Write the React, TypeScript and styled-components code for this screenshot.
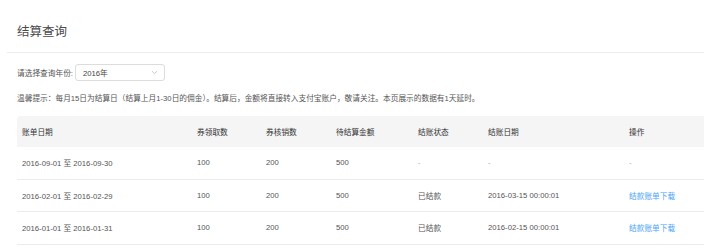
import React from "react";
import styled, { createGlobalStyle } from "styled-components";

const GlobalStyle = createGlobalStyle`
  html, body { margin: 0; padding: 0; background: #fff; overflow: hidden; }
  body { font-family: "Liberation Sans", "Noto Sans CJK SC", sans-serif; }
`;

const Page = styled.div`
  padding-left: 7px;
  width: 697px;
`;

const Header = styled.div`
  height: 52px;
  border-bottom: 1px solid #ececec;
  padding-left: 10px;
  display: flex;
  align-items: flex-start;
`;

const Title = styled.h1`
  margin: 22px 0 0;
  font-size: 12.5px;
  line-height: 20px;
  font-weight: 400;
  color: #4a4a4a;
`;

const Content = styled.div`
  padding-left: 10px;
`;

const FilterRow = styled.div`
  margin-top: 11px;
  display: flex;
  align-items: center;
  gap: 2px;
  height: 17px;
`;

const Label = styled.span`
  font-size: 7.7px;
  color: #555;
`;

const Select = styled.div`
  width: 90px;
  height: 17px;
  box-sizing: border-box;
  border: 1px solid #dcdcdc;
  border-radius: 3px;
  display: flex;
  align-items: center;
  justify-content: space-between;
  padding: 0 6px 0 7px;
  font-size: 7.7px;
  color: #444;
`;

const Notice = styled.p`
  margin: 12px 0 0;
  font-size: 7.7px;
  line-height: 12px;
  color: #555;
`;

const Table = styled.table`
  margin-top: 11px;
  width: 687px;
  border-collapse: separate;
  border-spacing: 0;
  table-layout: fixed;
  font-size: 7.7px;
`;

const Th = styled.th`
  background: #f5f5f5;
  height: 31px;
  padding: 0 5px;
  text-align: left;
  font-weight: 400;
  color: #333;
  &:first-child { border-top-left-radius: 4px; }
`;

const Td = styled.td<{ $muted?: boolean }>`
  height: 32.5px;
  box-sizing: border-box;
  padding: 0 5px;
  border-bottom: 1px solid #ebebeb;
  color: ${(p) => (p.$muted ? "#aaa" : "#555")};
  white-space: nowrap;
`;

const Link = styled.a`
  color: #4aa3f5;
  text-decoration: none;
  cursor: pointer;
`;

const widths = [175, 69, 70, 82, 70, 141, 80];
const headers = ["账单日期", "券领取数", "券核销数", "待结算金额", "结账状态", "结账日期", "操作"];

const rows = [
  { date: "2016-09-01 至 2016-09-30", a: "100", b: "200", c: "500", status: "-", time: "-", op: null },
  { date: "2016-02-01 至 2016-02-29", a: "100", b: "200", c: "500", status: "已结款", time: "2016-03-15 00:00:01", op: "结款账单下载" },
  { date: "2016-01-01 至 2016-01-31", a: "100", b: "200", c: "500", status: "已结款", time: "2016-02-15 00:00:01", op: "结款账单下载" },
];

export default function App() {
  return (
    <>
      <GlobalStyle />
      <Page>
        <Header>
          <Title>结算查询</Title>
        </Header>
        <Content>
          <FilterRow>
            <Label>请选择查询年份:</Label>
            <Select>
              <span>2016年</span>
              <svg width="7" height="5" viewBox="0 0 7 5" fill="none">
                <path d="M1 1.2 L3.5 3.6 L6 1.2" stroke="#bbb" strokeWidth="0.8" />
              </svg>
            </Select>
          </FilterRow>
          <Notice>
            温馨提示：每月15日为结算日（结算上月1-30日的佣金）。结算后，金额将直接转入支付宝账户，敬请关注。本页展示的数据有1天延时。
          </Notice>
          <Table>
            <colgroup>
              {widths.map((w, i) => (
                <col key={i} style={{ width: w }} />
              ))}
            </colgroup>
            <thead>
              <tr>
                {headers.map((h) => (
                  <Th key={h}>{h}</Th>
                ))}
              </tr>
            </thead>
            <tbody>
              {rows.map((r, i) => (
                <tr key={i}>
                  <Td>{r.date}</Td>
                  <Td>{r.a}</Td>
                  <Td>{r.b}</Td>
                  <Td>{r.c}</Td>
                  <Td $muted={r.status === "-"}>{r.status}</Td>
                  <Td $muted={r.time === "-"}>{r.time}</Td>
                  <Td $muted={!r.op}>{r.op ? <Link>{r.op}</Link> : "-"}</Td>
                </tr>
              ))}
            </tbody>
          </Table>
        </Content>
      </Page>
    </>
  );
}
